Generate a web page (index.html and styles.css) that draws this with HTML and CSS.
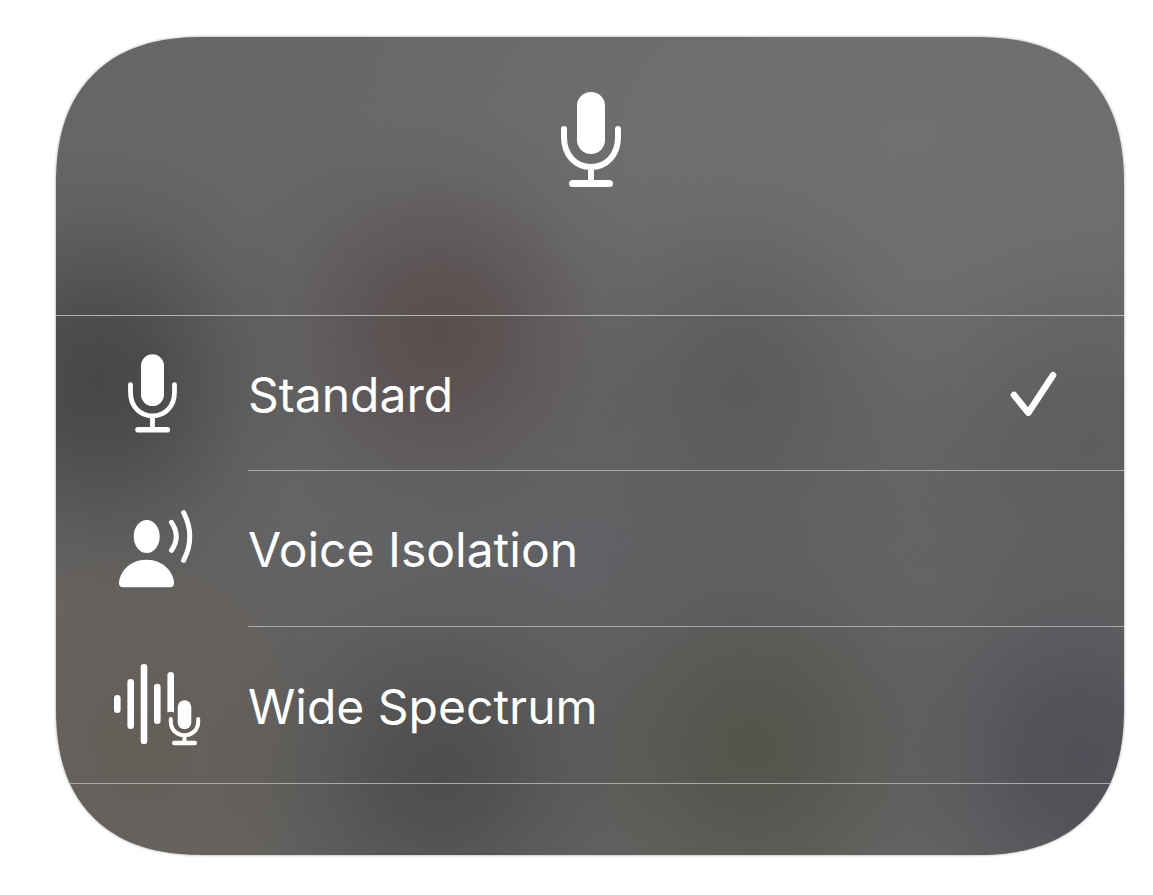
FILE: index.html
```
<!DOCTYPE html>
<html lang="en">
<head>
<meta charset="utf-8">
<meta name="viewport" content="width=device-width, initial-scale=1">
<title>Mic Mode</title>
<link rel="stylesheet" href="styles.css">
</head>
<body>
<main class="panel">
  <header class="panel-header">
    <svg class="header-icon" viewBox="0 0 64 96" aria-hidden="true">
      <rect class="solid" x="19" y="0" width="28" height="62" rx="14"/>
      <path class="line" stroke-width="6" d="M6 37v8c0 18 11.500 30 27 30s27-12 27-30v-8M33 75v16"/>
      <path class="line" stroke-width="7" d="M14.500 91.500h37"/>
    </svg>
  </header>
  <ul class="modes">
    <li>
      <button class="mode" type="button" aria-pressed="true">
        <span class="mode-icon">
          <svg class="glyph" viewBox="0 0 100 100" aria-hidden="true">
            <rect class="solid" x="39" y="10.300" width="23" height="51.700" rx="11.500"/>
            <path class="line" stroke-width="4.800" d="M28.500 40.700V48c0 14.500 9.500 24 22 24s22-9.500 22-24v-7.300M50.500 72v13"/>
            <path class="line" stroke-width="5.600" d="M36 85.700h29.300"/>
          </svg>
        </span>
        <span class="mode-body">
          <span class="mode-name">Standard</span>
          <svg class="check" viewBox="0 0 48 48" aria-hidden="true">
            <path class="line" stroke-width="6.600" d="M4 24l14.300 17.700L43 4.300"/>
          </svg>
        </span>
      </button>
    </li>
    <li>
      <button class="mode" type="button" aria-pressed="false">
        <span class="mode-icon">
          <svg class="glyph" viewBox="0 0 100 100" aria-hidden="true">
            <ellipse class="solid" cx="44.700" cy="36.500" rx="13" ry="16.500"/>
            <path class="solid" d="M21 87.300c-2.500 0-4-1.500-4-4 0-10 10-23.600 27.500-23.600S72 73.300 72 83.300c0 2.500-1.500 4-4 4z"/>
            <path class="line" stroke-width="5" d="M69.500 22.300Q79 36.500 69.500 50.300M81.600 12.700Q94 36.500 81.600 60.400"/>
          </svg>
        </span>
        <span class="mode-body">
          <span class="mode-name">Voice Isolation</span>
        </span>
      </button>
    </li>
    <li>
      <button class="mode" type="button" aria-pressed="false">
        <span class="mode-icon">
          <svg class="glyph" viewBox="0 0 100 100" aria-hidden="true">
            <path class="line" stroke-width="6.600" d="M15.300 42.300v11.400M28.700 26.300v43.400M42 11.400v73.600M55.300 31v33.700"/>
            <path class="solid" d="M65.400 56.500V19.300a3.300 3.300 0 0 1 6.600 0v37.200q-3.300-1.500-6.600 0z"/>
            <rect class="solid" x="75.700" y="44.300" width="13.600" height="29" rx="6.800"/>
            <path class="line" stroke-width="4" d="M68.800 63v2.500c0 8.500 6 13.700 13.700 13.700s13.700-5.200 13.700-13.700V63M82.500 79.200V87"/>
            <path class="line" stroke-width="4.600" d="M72.300 87h20.400"/>
          </svg>
        </span>
        <span class="mode-body">
          <span class="mode-name">Wide Spectrum</span>
        </span>
      </button>
    </li>
  </ul>
</main>
</body>
</html>
```
FILE: styles.css
```
* {
  box-sizing: border-box;
}

body {
  margin: 0;
  min-height: 100vh;
  padding: 37px 29px 40px 56px;
  background: #fff;
  color: #fff;
  font-family: Inter, "Liberation Sans", sans-serif;
}

.panel {
  overflow: hidden;
  padding-bottom: 71px;
  border-radius: 128px;
  background:
    radial-gradient(ellipse 220px 230px at 4% 42%, #474747 0%, #474747d8 25%, #47474780 50%, #47474728 75%, #47474700 100%),
    radial-gradient(ellipse 220px 220px at 36% 36%, #594e4e 0%, #594e4ed0 25%, #594e4e78 50%, #594e4e24 75%, #594e4e00 100%),
    radial-gradient(ellipse 220px 240px at 64% 43%, #5d5a5d 0%, #5d5a5dd0 25%, #5d5a5d78 50%, #5d5a5d24 75%, #5d5a5d00 100%),
    radial-gradient(ellipse 240px 230px at 36% 90%, #4d4e4c 0%, #4d4e4cd0 25%, #4d4e4c78 50%, #4d4e4c24 75%, #4d4e4c00 100%),
    radial-gradient(ellipse 240px 240px at 65% 87%, #53544b 0%, #53544bd0 25%, #53544b78 50%, #53544b24 75%, #53544b00 100%),
    radial-gradient(ellipse 230px 240px at 96% 88%, #514f57 0%, #514f57d8 25%, #514f5780 50%, #514f5728 75%, #514f5700 100%),
    radial-gradient(ellipse 280px 320px at 8% 86%, #655f59 0%, #655f59d8 25%, #655f5980 50%, #655f5928 75%, #655f5900 100%),
    radial-gradient(ellipse 260px 240px at 97% 50%, #5e5e5e 0%, #5e5e5ed8 25%, #5e5e5e80 50%, #5e5e5e28 75%, #5e5e5e00 100%),
    radial-gradient(ellipse 560px 240px at 50% 64%, #606164 0%, #60616480 50%, #60616400 100%),
    radial-gradient(ellipse 660px 420px at 80% 12%, #707070 0%, #707070d8 35%, #70707000 100%),
    #666666;
  box-shadow: 0 0 3px #00000066;
}

@supports (corner-shape: superellipse(1.5)) {
  .panel {
    border-radius: 148px;
    corner-shape: superellipse(1.25);
  }
}

.panel-header {
  display: flex;
  justify-content: center;
  height: 279px;
  padding-top: 55px;
  border-bottom: 1px solid #b4b4b4;
}

.header-icon {
  width: 64px;
  height: 96px;
}

.solid {
  fill: #fff;
}

.line {
  fill: none;
  stroke: #fff;
  stroke-linecap: round;
  stroke-linejoin: round;
}

.modes {
  margin: 0;
  padding: 0;
  list-style: none;
  border-bottom: 1px solid #a9a9a5;
}

.mode {
  display: flex;
  width: 100%;
  height: 156px;
  padding: 0;
  border: 0;
  background: none;
  color: inherit;
  font: inherit;
  text-align: left;
}

.modes li:first-child .mode {
  height: 155px;
}

.mode-icon {
  display: flex;
  flex: none;
  align-items: center;
  justify-content: center;
  width: 192px;
  height: 100%;
  padding-top: 1px;
}

.glyph {
  width: 100px;
  height: 100px;
}

.mode-body {
  display: flex;
  flex: 1;
  align-items: center;
  justify-content: space-between;
  height: 100%;
  padding: 3px 66px 0 0;
  border-bottom: 1px solid #a9a9a9;
}

.modes li:last-child .mode-body {
  border-bottom: 0;
}

.mode-name {
  font-size: 48px;
  line-height: 60px;
}

.check {
  width: 48px;
  height: 48px;
}
```
